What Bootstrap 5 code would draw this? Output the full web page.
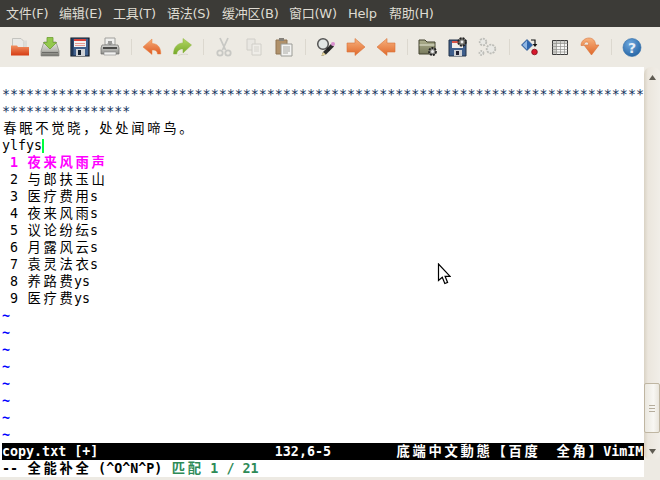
<!DOCTYPE html>
<html lang="zh">
<head>
<meta charset="utf-8">
<title>gvim</title>
<link href="https://cdn.jsdelivr.net/npm/bootstrap@5.3.0/dist/css/bootstrap.min.css" rel="stylesheet">
<style>
html,body{margin:0;height:480px;overflow:hidden;background:#edeae3}
.vim-win{width:660px;height:480px;position:relative}
.vim-menu{height:27px;background:#3c3b37;color:#dfdbd2;font:13px/27px "DejaVu Sans","Noto Sans CJK SC",sans-serif;padding-left:6px;white-space:nowrap}
.vim-menu span{display:block;letter-spacing:-.25px}
.vim-tool{height:40px;background:#edeae3;padding-left:5px}
.vim-tb{width:30px;height:40px;display:flex;align-items:center;justify-content:center;flex:none}
.vim-tb svg{display:block;width:20px;height:20px}
.vim-sep{width:12px;flex:none;display:flex;justify-content:center;align-items:center}
.vim-sep::before{content:"";display:block;width:1px;height:16px;background:#dcd8cf}
.vim-main{height:410px}
.vim-edit{width:644px;height:410px;background:#fff;padding:2px 0 0 2px;font:13.33px/17px "DejaVu Sans Mono","Noto Sans CJK SC",monospace;color:#000;flex:none}
.vim-l{height:17px;white-space:pre;width:642px;overflow:hidden}
.vim-c{letter-spacing:2.67px;margin-left:1.33px;margin-right:-1.33px}
.vim-star{color:#10305a}
.vim-sel{color:#ff00ff;font-weight:700}
.vim-til{color:#0000ff;font-weight:700}
.vim-caret{display:inline-block;width:2px;height:14px;background:#00ff40;vertical-align:-3px}
.vim-stat{background:#000;color:#fff;font-weight:700}
.vim-cmd{font-weight:700}
.vim-green{color:#2e8b57}
.vim-scroll{width:16px;height:393px;background:linear-gradient(90deg,#d9d2c4 0,#ebe6dd 25%,#f1eee8 100%);border-radius:7px;position:relative;flex:none}
.vim-thumb{width:16px;height:50px;margin-top:296px;background:linear-gradient(90deg,#eae7df,#f8f7f3 60%,#e9e5dc);border:1px solid #bfb6a2;border-radius:2px;display:flex;flex-direction:column;align-items:center;justify-content:center;gap:2px}
.vim-thumb i{display:block;width:6px;height:1px;background:#b5ad9c}
.vim-arr{display:flex;justify-content:center;height:20px;align-items:center}
.vim-arr svg{width:7px;height:5px;display:block}
.vim-mouse{position:absolute;left:437px;top:263px;width:14px;height:22px}
.vim-foot{height:3px;background:#edeae3}
</style>
</head>
<body>
<div class="vim-win d-flex flex-column">
  <div class="vim-menu d-flex">
    <span style="width:53px">文件(F)</span><span style="width:54px">编辑(E)</span><span style="width:54px">工具(T)</span><span style="width:55px">语法(S)</span><span style="width:67px">缓冲区(B)</span><span style="width:59px">窗口(W)</span><span style="width:41px">Help</span><span>帮助(H)</span>
  </div>
  <div class="vim-tool d-flex align-items-center">
    <div class="vim-tb"><svg viewBox="0 0 20 20"><defs><linearGradient id="g1" x1="0" y1="0" x2="0" y2="1"><stop offset="0" stop-color="#f09060"/><stop offset="1" stop-color="#d63c14"/></linearGradient></defs><path d="M2.500 1.500H11l3 3V11H2.500z" fill="#e9e9e6" stroke="#c4c4bf"/><path d="M14 3.500h3V10h-3z" fill="#dcdcd8"/><path d="M1 8.500h6l1 1.500h11v8.500H1z" fill="url(#g1)"/></svg></div>
    <div class="vim-tb"><svg viewBox="0 0 20 20"><defs><linearGradient id="g2" x1="0" y1="0" x2="0" y2="1"><stop offset="0" stop-color="#e9e9e4"/><stop offset=".6" stop-color="#b9b9b2"/><stop offset="1" stop-color="#6e6e69"/></linearGradient></defs><path d="M4 5h12l3 9v5H1v-5z" fill="url(#g2)" stroke="#8a8a84" stroke-width=".7"/><path d="M2 15h16v1H2z" fill="#6a6a66"/><path d="M7 .5h6v5h3.500L10 12 3.500 5.500H7z" fill="#93c84c" stroke="#6f9f32" stroke-width=".8"/></svg></div>
    <div class="vim-tb"><svg viewBox="0 0 20 20"><path d="M1 1h18v18H1z" fill="#3f5f8c" stroke="#0e1622" stroke-width="1.200"/><path d="M4 2h12v8H4z" fill="#f4f2f0"/><path d="M4 2h12v2H4z" fill="#d8433a"/><path d="M5 6h10v1H5z" fill="#e79a92"/><path d="M5 8h10v1H5z" fill="#e79a92"/><path d="M6 12h9v7H6z" fill="#cfd2d6"/><path d="M8 13h3v5H8z" fill="#14202e"/><path d="M1.500 1.500h2v17h-2z" fill="#1f3554"/></svg></div>
    <div class="vim-tb"><svg viewBox="0 0 20 20"><defs><linearGradient id="g4" x1="0" y1="0" x2="0" y2="1"><stop offset="0" stop-color="#d6d6d3"/><stop offset="1" stop-color="#8e8e8a"/></linearGradient></defs><path d="M5 1h10v7H5z" fill="#f0f0ee" stroke="#a0a09c"/><path d="M8 4h4v2l1 0-3 2.500L7 6h1z" fill="#9a9a98"/><path d="M2 8h16l1 3v6H1v-6z" fill="url(#g4)" stroke="#6f6f6b" stroke-width=".7"/><path d="M3 10h14v2H3z" fill="#4a4a48"/><path d="M4 15h12v3H4z" fill="#f1f1ef" stroke="#888"  stroke-width=".6"/></svg></div>
    <div class="vim-sep"></div>
    <div class="vim-tb"><svg viewBox="0 0 20 20"><defs><linearGradient id="g5" x1="0" y1="0" x2="0" y2="1"><stop offset="0" stop-color="#f6ad78"/><stop offset="1" stop-color="#de5a22"/></linearGradient></defs><path d="M1 10 10 2v4.500c5 0 9 3.500 8.800 10.500h-3.300c0-3-2.500-4.500-5.500-4v4.500z" fill="url(#g5)" stroke="#e9803f" stroke-width=".5"/></svg></div>
    <div class="vim-tb"><svg viewBox="0 0 20 20"><defs><linearGradient id="g6" x1="0" y1="0" x2="0" y2="1"><stop offset="0" stop-color="#b4d765"/><stop offset="1" stop-color="#76a92a"/></linearGradient></defs><path d="M19.500 8 11 1.500V6C6 6 1.500 10 1.500 17h3.300c0-3 3-5.500 6.200-5v4z" fill="url(#g6)" stroke="#88b33c" stroke-width=".5"/><path d="M6 18.500c3-1.500 7-1.500 10-1" stroke="#d8d5cc" fill="none"/></svg></div>
    <div class="vim-sep"></div>
    <div class="vim-tb"><svg viewBox="0 0 20 20" fill="none" stroke="#c8c8c4"><path d="M6 1l5.500 12M14 1 8.500 13" stroke-width="1.800"/><circle cx="6" cy="16" r="2.700" stroke-width="1.800"/><circle cx="14" cy="16" r="2.700" stroke-width="1.800"/></svg></div>
    <div class="vim-tb"><svg viewBox="0 0 20 20"><path d="M3 2h8v11H3z" fill="#e9e7e2" stroke="#d0cec8"/><path d="M8 7h9v11H8z" fill="#efede8" stroke="#d0cec8"/><path d="M10 10h5M10 12h5M10 14h5" stroke="#d6d4ce"/></svg></div>
    <div class="vim-tb"><svg viewBox="0 0 20 20"><path d="M2 3h11v14H2z" fill="#b0916a" stroke="#8f7553"/><path d="M5 1h5v3H5z" fill="#85817a"/><path d="M7 7h11v12H7z" fill="#f3f3f1" stroke="#9b9b96"/><path d="M9 10h7M9 12h7M9 14h7M9 16h5" stroke="#a9a9a4"/></svg></div>
    <div class="vim-sep"></div>
    <div class="vim-tb"><svg viewBox="0 0 20 20"><path d="M5.500 19 7 15 15 7l3 2.500-8 8z" fill="#2c2c2c"/><path d="M5.500 19 7 15l3 2.500z" fill="#e6d59a"/><circle cx="17" cy="7" r="2" fill="#d98fcf"/><circle cx="7" cy="7" r="5.300" fill="#e2e6e4" stroke="#555" stroke-width="1.500"/><path d="M11 11l2.500 2.500" stroke="#222" stroke-width="2"/></svg></div>
    <div class="vim-tb"><svg viewBox="0 0 20 20"><defs><linearGradient id="g7" x1="0" y1="0" x2="0" y2="1"><stop offset="0" stop-color="#f7b27e"/><stop offset="1" stop-color="#e0682a"/></linearGradient></defs><path d="M1 6h8V1.500l10 8.500-10 8.500V15H1z" fill="url(#g7)" stroke="#d9743a" stroke-width=".6"/></svg></div>
    <div class="vim-tb"><svg viewBox="0 0 20 20"><path d="M19 6h-8V1.500L1 10l10 8.500V15h8z" fill="url(#g7)" stroke="#d9743a" stroke-width=".6"/></svg></div>
    <div class="vim-sep"></div>
    <div class="vim-tb"><svg viewBox="0 0 20 20"><defs><linearGradient id="g8" x1="0" y1="0" x2="0" y2="1"><stop offset="0" stop-color="#aeb08e"/><stop offset="1" stop-color="#77795c"/></linearGradient></defs><path d="M1 3h6l2 2h8v12H1z" fill="url(#g8)" stroke="#42432f"/><path d="M1.500 8h15" stroke="#e7e8d6"/><circle cx="14.500" cy="14.500" r="3.500" fill="#8a8a86" stroke="#222" stroke-width="1.800" stroke-dasharray="2 1"/><circle cx="14.500" cy="14.500" r="1.500" fill="#eee"/></svg></div>
    <div class="vim-tb"><svg viewBox="0 0 20 20"><path d="M1 3h17v16H1z" fill="#3f5f8c" stroke="#233248"/><path d="M4 4h11v7H4z" fill="#f2eeea"/><path d="M4 4h11v2H4z" fill="#d8564a"/><path d="M6 13h8v6H6z" fill="#cfd2d6"/><path d="M8 14h3v4H8z" fill="#223"/><circle cx="14" cy="5" r="3.800" fill="#7b7b77" stroke="#222" stroke-width="1.900" stroke-dasharray="2 1"/><circle cx="14" cy="5" r="1.400" fill="#eee"/></svg></div>
    <div class="vim-tb"><svg viewBox="0 0 20 20" fill="#e9e9e5" stroke="#bdbdb8" stroke-width="1.800"><circle cx="5" cy="5" r="3.300" stroke-dasharray="2 1"/><circle cx="13" cy="12" r="4.300" stroke-dasharray="2 1"/><circle cx="3.500" cy="16" r="2" stroke-dasharray="1.500 1"/></svg></div>
    <div class="vim-sep"></div>
    <div class="vim-tb"><svg viewBox="0 0 20 20"><path d="M7 2.500 12.500 8 7 13.500 1.500 8z" fill="#2f66ad" stroke="#24508c" stroke-width=".7"/><path d="M7 3.500V12.500L2.500 8z" fill="#8fb6e3"/><path d="M11 3h4v5" fill="none" stroke="#111" stroke-width="1.200"/><path d="M12.700 7h4.600L15 10z" fill="#111"/><circle cx="14.500" cy="15" r="2.800" fill="#d8182c" stroke="#7e0c18" stroke-width=".8"/></svg></div>
    <div class="vim-tb"><svg viewBox="0 0 20 20"><path d="M2.500 3.500h15v14h-15z" fill="#f6f6f4" stroke="#3c3c3c"/><path d="M3 4h14v2.500H3zM3 4h3.500v13H3z" fill="#cfcfcb"/><path d="M2.500 6.500h15M2.500 9.500h15M2.500 12.500h15M2.500 15h15M6.500 3.500v14M10.500 3.500v14M14.500 3.500v14" stroke="#8f8f8b" stroke-width=".7" fill="none"/></svg></div>
    <div class="vim-tb"><svg viewBox="0 0 20 20"><path d="M1 8.500C1 4 5 1 9 1c4 0 6.500 3 6.500 7H19l-7.500 10L4 8h4.500C9 6 8 5 6.500 5 5 5 4 6.500 3.500 8.500z" fill="url(#g7)" stroke="#d9743a" stroke-width=".6"/></svg></div>
    <div class="vim-sep"></div>
    <div class="vim-tb"><svg viewBox="0 0 20 20"><defs><radialGradient id="g9" cx=".4" cy=".3" r=".8"><stop offset="0" stop-color="#6fa8de"/><stop offset="1" stop-color="#1f5f9f"/></radialGradient></defs><circle cx="10" cy="10.500" r="9" fill="url(#g9)" stroke="#2a6aa8" stroke-width=".6"/><text x="10" y="15.500" text-anchor="middle" font-family="'DejaVu Sans',sans-serif" font-weight="700" font-size="14" fill="#e6eef6">?</text></svg></div>
  </div>
  <div class="vim-main d-flex align-items-start">
    <div class="vim-edit">
      <div class="vim-l"> </div>
      <div class="vim-l vim-star">********************************************************************************</div>
      <div class="vim-l vim-star">****************</div>
      <div class="vim-l"><span class="vim-c">春眠不觉晓，处处闻啼鸟。</span></div>
      <div class="vim-l">ylfys<span class="vim-caret"></span></div>
      <div class="vim-l vim-sel"> 1 <span class="vim-c">夜来风雨声</span></div>
      <div class="vim-l"> 2 <span class="vim-c">与郎扶玉山</span></div>
      <div class="vim-l"> 3 <span class="vim-c">医疗费用</span>s</div>
      <div class="vim-l"> 4 <span class="vim-c">夜来风雨</span>s</div>
      <div class="vim-l"> 5 <span class="vim-c">议论纷纭</span>s</div>
      <div class="vim-l"> 6 <span class="vim-c">月露风云</span>s</div>
      <div class="vim-l"> 7 <span class="vim-c">袁灵法衣</span>s</div>
      <div class="vim-l"> 8 <span class="vim-c">养路费</span>ys</div>
      <div class="vim-l"> 9 <span class="vim-c">医疗费</span>ys</div>
      <div class="vim-l vim-til">~</div>
      <div class="vim-l vim-til">~</div>
      <div class="vim-l vim-til">~</div>
      <div class="vim-l vim-til">~</div>
      <div class="vim-l vim-til">~</div>
      <div class="vim-l vim-til">~</div>
      <div class="vim-l vim-til">~</div>
      <div class="vim-l vim-til">~</div>
      <div class="vim-l vim-stat">copy.txt [+]                      132,6-5        <span class="vim-c">底端中文動態【百度</span>  <span class="vim-c">全角】</span>VimIM</div>
      <div class="vim-l vim-cmd">-- <span class="vim-c">全能补全</span> (^O^N^P) <span class="vim-green"><span class="vim-c">匹配</span> 1 / 21</span></div>
    </div>
    <div class="vim-scroll">
      <div class="vim-arr"><svg viewBox="0 0 7 5"><path d="M3.500 0 7 5H0z" fill="#5f5b52"/></svg></div>
      <div class="vim-thumb"><i></i><i></i><i></i></div>
      <div class="vim-arr mt-2"><svg viewBox="0 0 7 5"><path d="M3.500 5 7 0H0z" fill="#5f5b52"/></svg></div>
    </div>
  </div>
  <div class="vim-foot"></div>
  <svg class="vim-mouse" viewBox="0 0 14 22"><path d="M1.500 1v16.500l3.800-3.300 2.500 6.300 2.800-1.100-2.500-6.100h5z" fill="#fff" stroke="#000" stroke-width="1.200"/></svg>
</div>
<script src="https://cdn.jsdelivr.net/npm/bootstrap@5.3.0/dist/js/bootstrap.bundle.min.js"></script>
</body>
</html>
